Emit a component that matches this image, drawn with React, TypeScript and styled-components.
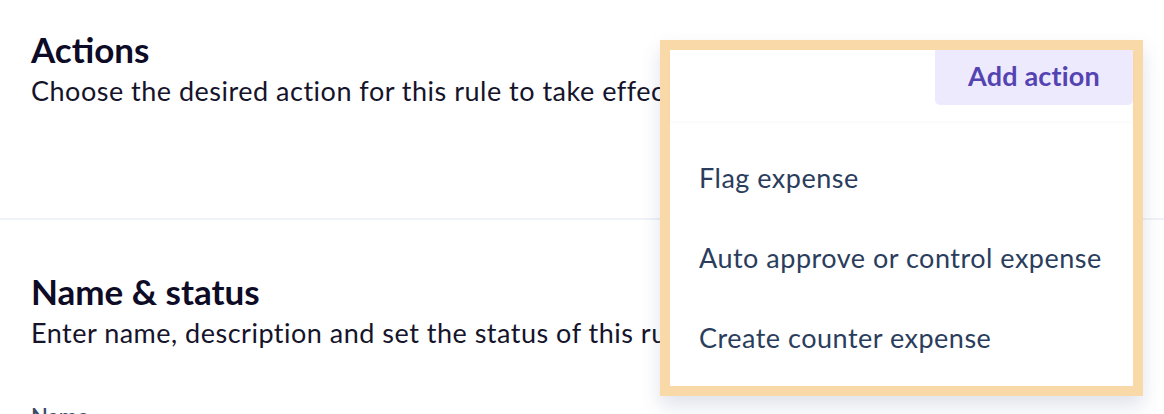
import styled, { createGlobalStyle } from "styled-components"

const GlobalStyle = createGlobalStyle`
  html, body {
    margin: 0;
    padding: 0;
    background: #ffffff;
    font-family: "Lato", "Open Sans", sans-serif;
    -webkit-font-smoothing: antialiased;
  }
`

const menuItems = [
  "Flag expense",
  "Auto approve or control expense",
  "Create counter expense",
]

const App = () => {
  return (
    <Page>
      <GlobalStyle />
      <Section first>
        <Heading>Actions</Heading>
        <Description>Choose the desired action for this rule to take effect</Description>
      </Section>
      <Section>
        <Heading>Name &amp; status</Heading>
        <Description>Enter name, description and set the status of this rule</Description>
        <FieldLabel>Name</FieldLabel>
      </Section>

      <Dropdown>
        <DropdownHeader>
          <AddButton type="button">Add action</AddButton>
        </DropdownHeader>
        <MenuList>
          {menuItems.map(item => (
            <MenuItem key={item}>{item}</MenuItem>
          ))}
        </MenuList>
      </Dropdown>
    </Page>
  )
}
export default App

const Page = styled.div`
  position: relative;
  width: 1164px;
  height: 414px;
  overflow: hidden;
`

const Section = styled.section<{ first?: boolean }>`
  box-sizing: border-box;
  padding: ${props => (props.first ? "29px 31px 0" : "51px 31px 0")};
  height: ${props => (props.first ? "220px" : "auto")};
  border-bottom: ${props => (props.first ? "2px solid #eff2f7" : "none")};
`

const Heading = styled.h2`
  margin: 0;
  font-size: 35px;
  line-height: 40px;
  font-weight: 700;
  color: #0d0b26;
`

const Description = styled.p`
  margin: 6px 0 0;
  font-size: 27px;
  line-height: 32px;
  font-weight: 400;
  letter-spacing: 0.5px;
  color: #15142b;
  white-space: nowrap;
`

const FieldLabel = styled.div`
  margin-top: 54px;
  font-size: 22px;
  line-height: 28px;
  font-weight: 600;
  color: #3b4a68;
`

/* overlay menu opened from the "Add action" button */
const Dropdown = styled.div`
  position: absolute;
  left: 660px;
  top: 40px;
  width: 463px;
  height: 336px;
  border: 10px solid #fad9a9;
  background: #ffffff;
  box-shadow: 0 10px 18px rgba(60, 80, 130, 0.16);
  display: flex;
  flex-direction: column;
`

const DropdownHeader = styled.div`
  display: flex;
  justify-content: flex-end;
  align-items: flex-start;
  height: 71px;
  flex: 0 0 71px;
  position: relative;
  z-index: 1;
  box-shadow: 0 2px 4px rgba(0, 0, 0, 0.025);
`

const AddButton = styled.button`
  width: 198px;
  height: 55px;
  border: none;
  border-radius: 0 0 5px 5px;
  background: #eeeafd;
  color: #5444b2;
  font-family: "Lato", "Open Sans", sans-serif;
  font-size: 27px;
  font-weight: 700;
  letter-spacing: 0.2px;
  cursor: pointer;
  padding: 0 0 5px;
`

const MenuList = styled.ul`
  list-style: none;
  margin: 0;
  padding: 16px 0 0;
`

const MenuItem = styled.li`
  height: 80px;
  display: flex;
  align-items: center;
  padding-left: 29px;
  font-size: 27px;
  letter-spacing: 0.5px;
  color: #2b3d5c;
  cursor: pointer;
`
